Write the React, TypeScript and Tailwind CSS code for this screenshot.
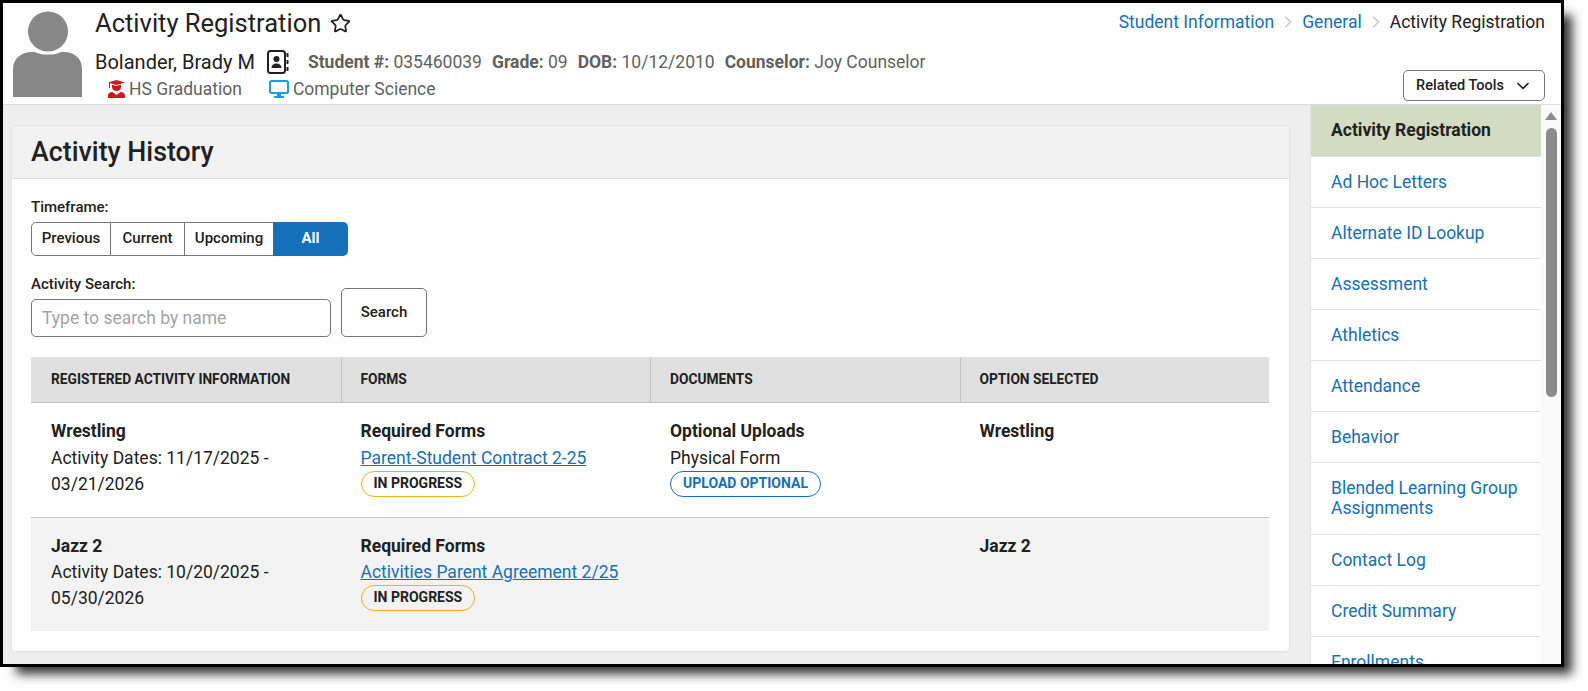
import { ChevronDown, ChevronRight, Star } from 'lucide-react';

const navItems = [
  'Ad Hoc Letters',
  'Alternate ID Lookup',
  'Assessment',
  'Athletics',
  'Attendance',
  'Behavior',
  'Blended Learning Group Assignments',
  'Contact Log',
  'Credit Summary',
  'Enrollments',
];

function Avatar() {
  return (
    <svg width="70" height="86" viewBox="0 0 70 86" className="mt-[8px] ml-[10px] shrink-0">
      <circle cx="35" cy="20.5" r="20" fill="#878787" />
      <path d="M0 86V58C0 47 9 41 19 41H22C27 44.5 43 44.5 48 41H51C61 41 69 47 69 58V86Z" fill="#878787" />
    </svg>
  );
}

function ContactIcon() {
  return (
    <svg width="23" height="24" viewBox="0 0 23 24" className="ml-[12px] shrink-0">
      <rect x="1" y="1" width="17" height="22" rx="2.5" fill="none" stroke="#212121" strokeWidth="2" />
      <circle cx="9.5" cy="9" r="3" fill="#212121" />
      <path d="M4.5 18c0-3 2-4.5 5-4.5s5 1.5 5 4.5z" fill="#212121" />
      <path d="M20.5 3v4M20.5 10v4M20.5 17v4" stroke="#212121" strokeWidth="2" />
    </svg>
  );
}

function GradIcon() {
  return (
    <svg width="17" height="18" viewBox="0 0 17 18" className="shrink-0">
      <path d="M0 2.5 8.5 0 17 2.5 8.5 5z" fill="#c8191f" />
      <path d="M1 3v5h1V3z" fill="#c8191f" />
      <path d="M4 4.5 8.5 6 13 4.5V7c0 2.5-2 4-4.5 4S4 9.5 4 7z" fill="#c8191f" />
      <path d="M0 18v-2.5C0 13.5 2 12 4.5 12L8.5 15 12.5 12C15 12 17 13.5 17 15.5V18z" fill="#c8191f" />
    </svg>
  );
}

function DesktopIcon() {
  return (
    <svg width="20" height="18" viewBox="0 0 20 18" className="ml-[27px] shrink-0">
      <rect x="1" y="1" width="18" height="12" rx="1.5" fill="#ffffff" stroke="#1b9ddb" strokeWidth="2" />
      <path d="M8 14h4v2h3v2H5v-2h3z" fill="#1b9ddb" />
    </svg>
  );
}

function Meta({ label, value }: { label: string; value: string }) {
  return (
    <span className="mr-[10px]">
      <span className="font-bold">{label}</span> {value}
    </span>
  );
}

function Badge({ text, blue }: { text: string; blue?: boolean }) {
  return (
    <span
      className={
        blue
          ? 'inline-block h-[26px] w-fit rounded-full border border-[#1470b8] bg-white px-[12px] text-[14px] leading-[23px] font-bold text-[#1470b8]'
          : 'inline-block h-[26px] w-fit rounded-full border border-[#f5b014] px-[12px] text-[14px] leading-[23px] font-bold text-[#212121]'
      }
    >
      {text}
    </span>
  );
}

function FormLink({ children }: { children: string }) {
  return <a className="text-[17.5px] leading-[26px] text-[#1470b8] underline">{children}</a>;
}

function ActivityRow({
  name,
  dates,
  form,
  upload,
  striped,
}: {
  name: string;
  dates: string[];
  form: string;
  upload?: boolean;
  striped?: boolean;
}) {
  return (
    <div
      className={
        striped
          ? 'grid h-[113px] grid-cols-4 bg-[#f3f3f3] pt-[15px] text-[17.5px] leading-[26px] text-[#212121]'
          : 'grid h-[115px] grid-cols-4 border-b border-[#c4c4c4] pt-[15px] text-[17.5px] leading-[26px] text-[#212121] [&>div>*:nth-child(2)]:mt-[1px]'
      }
    >
      <div className="pl-[20px]">
        <div className="font-bold">{name}</div>
        {dates.map((d) => (
          <div key={d}>{d}</div>
        ))}
      </div>
      <div className="flex flex-col items-start pl-[20px]">
        <div className="font-bold">Required Forms</div>
        <FormLink>{form}</FormLink>
        <Badge text="IN PROGRESS" />
      </div>
      <div className="flex flex-col items-start pl-[20px]">
        {upload && (
          <>
            <div className="font-bold">Optional Uploads</div>
            <div>Physical Form</div>
            <Badge text="UPLOAD OPTIONAL" blue />
          </>
        )}
      </div>
      <div className="pl-[20px] font-bold">{name}</div>
    </div>
  );
}

export default function App() {
  return (
    <div className="h-[691px] w-[1588px] overflow-hidden bg-white font-['Roboto',sans-serif]">
      <div className="flex h-[667px] w-[1564px] flex-col overflow-hidden border-[3px] border-black shadow-[12px_11px_10px_-4px_rgba(0,0,0,0.8)]">
        <header className="flex h-[102px] shrink-0 border-b border-[#dcdcdc] bg-white">
          <Avatar />
          <div className="ml-[12px] flex-1">
            <div className="mt-[3px] flex items-center text-[25.5px] leading-[34px] text-[#212121]">
              Activity Registration
              <Star size={21} strokeWidth={2} className="ml-[9px]" />
            </div>
            <div className="mt-[8px] flex h-[28px] items-center text-[17.5px]">
              <span className="text-[20px] text-[#212121]">Bolander, Brady M</span>
              <ContactIcon />
              <div className="ml-[18px] text-[#616161]">
                <Meta label="Student #:" value="035460039" />
                <Meta label="Grade:" value="09" />
                <Meta label="DOB:" value="10/12/2010" />
                <Meta label="Counselor:" value="Joy Counselor" />
              </div>
            </div>
            <div className="mt-[1px] ml-[13px] flex h-[24px] items-center text-[17.5px] text-[#616161]">
              <GradIcon />
              <span className="ml-[4px]">HS Graduation</span>
              <DesktopIcon />
              <span className="ml-[4px]">Computer Science</span>
            </div>
          </div>
          <div className="mr-[16px] flex flex-col items-end">
            <div className="mt-[5px] flex h-[28px] items-center text-[17.5px] text-[#212121]">
              <a className="text-[#1470b8]">Student Information</a>
              <ChevronRight size={20} strokeWidth={1.5} color="#c4c4c4" className="mx-[4px]" />
              <a className="text-[#1470b8]">General</a>
              <ChevronRight size={20} strokeWidth={1.5} color="#c4c4c4" className="mx-[4px]" />
              <span>Activity Registration</span>
            </div>
            <button className="mt-[34px] flex h-[31px] w-[142px] items-center justify-center gap-[9px] rounded-[5px] border border-[#767676] bg-white pl-[1px] text-[14.5px] font-medium text-[#212121]">
              Related Tools
              <ChevronDown size={20} strokeWidth={2} />
            </button>
          </div>
        </header>

        <div className="flex min-h-0 flex-1 bg-[#eeeeee]">
          <main className="flex-1 pt-[20px] pr-[20px] pl-[8px]">
            <section className="h-[527px] rounded-[4px] border border-[#e2e2e2] bg-white">
              <div className="flex h-[53px] items-center border-b border-[#e2e2e2] bg-[#f2f2f2] px-[19px] text-[26.8px] font-medium text-[#212121]">
                Activity History
              </div>
              <div className="pt-[19px] pr-[20px] pl-[19px]">
                <div className="text-[15px] leading-[18px] font-medium text-[#212121]">Timeframe:</div>
                <div className="mt-[6px] flex h-[34px] w-[317px] text-[15px] font-medium text-[#212121]">
                  <button className="w-[80px] rounded-l-[5px] border border-[#767676] pb-[2px]">Previous</button>
                  <button className="w-[74px] border-y border-r border-[#767676] pb-[2px]">Current</button>
                  <button className="w-[88px] border-y border-[#767676] pb-[2px]">Upcoming</button>
                  <button className="flex-1 rounded-r-[5px] bg-[#1470b8] pb-[2px] font-bold text-white">All</button>
                </div>
                <div className="mt-[19px] text-[15px] leading-[18px] font-medium text-[#212121]">Activity Search:</div>
                <div className="-mt-[5px] flex items-end gap-[10px]">
                  <input
                    placeholder="Type to search by name"
                    className="h-[38px] w-[300px] rounded-[5px] border border-[#767676] bg-white px-[10px] text-[17.5px] placeholder:text-[#a3a3a9]"
                  />
                  <button className="h-[49px] w-[86px] rounded-[5px] border border-[#767676] bg-white text-[15px] font-medium text-[#212121]">
                    Search
                  </button>
                </div>
                <div className="mt-[20px] grid h-[46px] grid-cols-4 items-stretch border-b border-[#c4c4c4] bg-[#e0e0e0] text-[13.75px] font-bold text-[#212121]">
                  {['REGISTERED ACTIVITY INFORMATION', 'FORMS', 'DOCUMENTS', 'OPTION SELECTED'].map((h, i) => (
                    <div
                      key={h}
                      className={i === 0 ? 'flex items-center pl-[20px]' : 'flex items-center border-l border-[#c4c4c4] pl-[19px]'}
                    >
                      {h}
                    </div>
                  ))}
                </div>
                <ActivityRow
                  name="Wrestling"
                  dates={['Activity Dates: 11/17/2025 -', '03/21/2026']}
                  form="Parent-Student Contract 2-25"
                  upload
                />
                <ActivityRow
                  name="Jazz 2"
                  dates={['Activity Dates: 10/20/2025 -', '05/30/2026']}
                  form="Activities Parent Agreement 2/25"
                  striped
                />
              </div>
            </section>
          </main>

          <nav className="w-[231px] shrink-0 overflow-hidden border-l border-[#e2e2e2] bg-white text-[17.5px] leading-[20px] text-[#1470b8]">
            <div className="flex h-[52px] items-center border-b border-[#e2e2e2] bg-[#d3dcc3] pb-[2px] pl-[20px] font-bold text-[#212121]">
              Activity Registration
            </div>
            {navItems.map((item) => (
              <div
                key={item}
                className={
                  item.length > 30
                    ? 'flex min-h-[51px] shrink-0 items-center border-b border-[#e2e2e2] pt-[15px] pr-[10px] pb-[16px] pl-[20px]'
                    : 'flex min-h-[51px] shrink-0 items-center border-b border-[#e2e2e2] py-[15px] pr-[10px] pl-[20px]'
                }
              >
                {item}
              </div>
            ))}
          </nav>

          <div className="flex w-[20px] shrink-0 flex-col items-center bg-[#fafafa] pt-[7px]">
            <div className="h-0 w-0 border-x-[6.5px] border-b-[8px] border-x-transparent border-b-[#8c8c8c]" />
            <div className="mt-[8px] h-[269px] w-[11px] rounded-full bg-[#8c8c8c]" />
          </div>
        </div>
      </div>
    </div>
  );
}
